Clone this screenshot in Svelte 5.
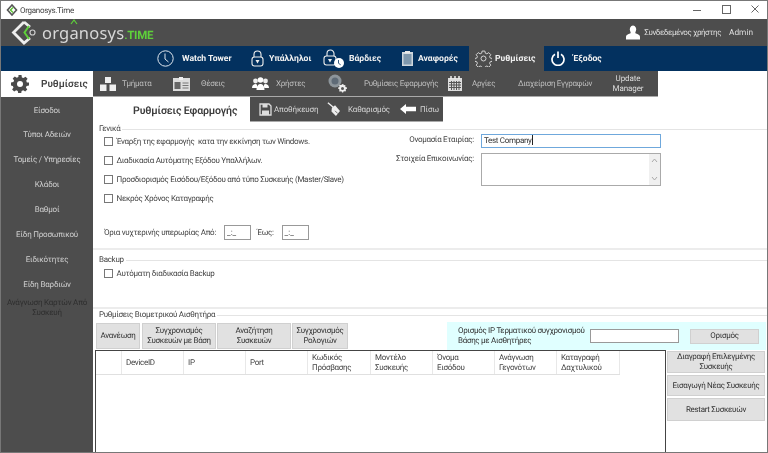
<script>
  const sideItems = ['Τύποι Αδειών', 'Τομείς / Υπηρεσίες', 'Κλάδοι', 'Βαθμοί', 'Είδη Προσωπικού', 'Ειδικότητες', 'Είδη Βαρδιών'];
  const checks = [
    'Έναρξη της εφαρμογής  κατα την εκκίνηση των Windows.',
    'Διαδικασία Αυτόματης Εξόδου Υπαλλήλων.',
    'Προσδιορισμός Εισόδου/Εξόδου από τύπο Συσκευής (Master/Slave)',
    'Νεκρός Χρόνος Καταγραφής'
  ];
  const columns = [
    ['', 26], ['DeviceID', 62], ['IP', 62], ['Port', 62], ['Κωδικός Πρόσβασης', 63],
    ['Μοντέλο Συσκευής', 62], ['Όνομα Εισόδου', 62], ['Ανάγνωση Γεγονότων', 62], ['Καταγραφή Δαχτυλικού', 63]
  ];
</script>

<div class="window">
  <div class="titlebar">
    <svg class="app-icon" width="12" height="12" viewBox="0 0 12 12">
      <path d="M6 1 1.5 6 6 11 10.5 6Z" fill="none" stroke="#555" stroke-width="1.6" />
      <path d="M7 3.5 4.5 6 7 8.500" fill="none" stroke="#5cc232" stroke-width="1.5" />
    </svg>
    <span class="app-title">Organosys.Time</span>
    <div class="win-controls">
      <svg width="12" height="12" viewBox="0 0 12 12"><path d="M1 6.500h8" stroke="#666" /></svg>
      <svg width="12" height="12" viewBox="0 0 12 12"><rect x="1.500" y="1.500" width="8" height="8" fill="none" stroke="#666" /></svg>
      <svg width="12" height="12" viewBox="0 0 12 12"><path d="M1.500 1.500l7 7M8.500 1.500l-7 7" stroke="#666" /></svg>
    </div>
  </div>

  <header class="brandbar">
    <div class="logo">
      <svg width="30" height="27" viewBox="0 0 30 27">
        <path d="M13 3 2.500 13.500 13 24 19 19" fill="none" stroke="#eee" stroke-width="2.800" />
        <path d="M13 3 19 8" fill="none" stroke="#eee" stroke-width="2.800" />
        <path d="M18 7 13.500 13.500 18 20" fill="none" stroke="#5ed03a" stroke-width="2" />
        <circle cx="21.500" cy="13.500" r="2.500" fill="none" stroke="#ccc" stroke-width="1.200" />
      </svg>
      <span class="logo-name">organosys</span><span class="logo-suffix">.TIME</span>
      <svg class="logo-caret" width="8" height="6" viewBox="0 0 8 6"><path d="M1 5 4 1 7 5" fill="none" stroke="#5ed03a" stroke-width="1.200" /></svg>
    </div>
    <div class="user">
      <svg width="14" height="16" viewBox="0 0 15 16"><path d="M7.500 0a3.500 4 0 0 1 3 6c-.6 1.200-.8 2 .2 2.600 2 .8 4.300 1.400 4.300 3.400v3H0v-3c0-2 2.300-2.600 4.300-3.400 1-.6.800-1.400.2-2.600a3.500 4 0 0 1 3-6Z" fill="#fff" /></svg>
      <span class="user-label">Συνδεδεμένος χρήστης</span>
      <span class="user-name">Admin</span>
    </div>
  </header>

  <nav class="mainnav">
    <div class="nav-item w-tower">
      <svg width="17" height="17" viewBox="0 0 17 17"><circle cx="8.500" cy="8.500" r="7.700" fill="none" stroke="#dfe6ee" /><path d="M8 3.500V9l3.500 3" fill="none" stroke="#dfe6ee" /></svg>
      <span>Watch Tower</span>
    </div>
    <div class="nav-item w-staff">
      <svg width="13" height="17" viewBox="0 0 13 17"><path d="M3 7V4.500a3.500 3.500 0 0 1 7 0V7" fill="none" stroke="#eee" stroke-width="1.100" /><rect x="1" y="7" width="11" height="9" rx="2.500" fill="none" stroke="#eee" stroke-width="1.100" /><path d="M4.500 10h4L6.500 13.500Z" fill="#eee" /></svg>
      <span>Υπάλληλοι</span>
    </div>
    <div class="nav-item w-shifts">
      <svg width="22" height="19" viewBox="0 0 22 19"><path d="M4 7V4.500a3.500 3.500 0 0 1 7 0V7" fill="none" stroke="#eee" stroke-width="1.100" /><rect x="1" y="7" width="12" height="9" rx="2.500" fill="none" stroke="#eee" stroke-width="1.100" /><path d="M5 10h4L7 13.500Z" fill="#eee" /><circle cx="16" cy="14" r="5" fill="#fff" /><path d="M15.500 11v3.300l2.200 1.500" fill="none" stroke="#35597f" /></svg>
      <span>Βάρδιες</span>
    </div>
    <div class="nav-item w-reports">
      <svg width="11" height="15" viewBox="0 0 11 15"><rect x="0" y="1" width="11" height="14" fill="#cfd6dc" /><rect x="1.500" y="3" width="8" height="10.500" fill="#7f98ad" /><rect x="3" y="0" width="5" height="2.500" fill="#e8e8e8" /></svg>
      <span>Αναφορές</span>
    </div>
    <div class="nav-item active">
      <svg width="17" height="17" viewBox="0 0 24 24"><path d="M10 1.500h4l.6 3 2.200.9 2.600-1.700 2.900 2.900-1.700 2.600.9 2.200 3 .6v4l-3 .6-.9 2.200 1.700 2.600-2.900 2.900-2.600-1.700-2.200.9-.6 3h-4l-.6-3-2.200-.9-2.600 1.700-2.900-2.900 1.700-2.600-.9-2.200-3-.6v-4l3-.6.9-2.200-1.700-2.600 2.900-2.900 2.600 1.700 2.200-.9Z" fill="none" stroke="#ddd" stroke-width="1.300" /><circle cx="12" cy="12" r="3.500" fill="none" stroke="#ddd" stroke-width="1.300" /></svg>
      <span>Ρυθμίσεις</span>
    </div>
    <div class="nav-item w-exit">
      <svg width="14" height="15" viewBox="0 0 14 15"><path d="M4 3.200a6 6 0 1 0 6 0" fill="none" stroke="#fff" stroke-width="1.700" /><path d="M7 0.500v6.500" stroke="#fff" stroke-width="1.700" /></svg>
      <span>Έξοδος</span>
    </div>
  </nav>

  <div class="workspace">
    <aside class="side">
      <div class="side-head">
        <svg width="18" height="18" viewBox="0 0 18 18"><path d="M7.500 0h3l.4 2.400 1.600.7 2-1.400 2.100 2.100-1.400 2 .7 1.600L18 7.500v3l-2.400.4-.7 1.600 1.400 2-2.100 2.100-2-1.400-1.600.7-.4 2.400h-3l-.4-2.400-1.600-.7-2 1.400-2.100-2.100 1.400-2-.7-1.600L0 10.500v-3l2.400-.4.7-1.600-1.400-2 2.100-2.100 2 1.400 1.600-.7Z" fill="#4a4a4a" /><circle cx="9" cy="9" r="3" fill="#fff" /></svg>
        <span>Ρυθμίσεις</span>
      </div>
      <div class="side-list">
        <div class="side-item first">Είσοδοι</div>
        {#each sideItems as item}
          <div class="side-item">{item}</div>
        {/each}
        <div class="side-item last">Ανάγνωση Καρτών Από Συσκευή</div>
      </div>
    </aside>

    <div class="page">
      <div class="subnav">
        <div class="sub-item w-dep">
          <svg width="16" height="14" viewBox="0 0 16 14"><rect x="5" y="0" width="6" height="6" fill="#eee" /><rect x="0" y="7.500" width="6.500" height="6.500" fill="#eee" /><rect x="9.500" y="7.500" width="6.500" height="6.500" fill="#eee" /></svg>
          <span>Τμήματα</span>
        </div>
        <div class="sub-item w-pos">
          <svg width="17" height="14" viewBox="0 0 17 14"><rect x="0" y="1" width="17" height="13" fill="#ddd" /><rect x="6" y="0" width="4" height="3" fill="#eee" /><rect x="1.500" y="5" width="6" height="7" fill="#666" /><path d="M9.500 6h6M9.500 8.500h6M9.500 11h6" stroke="#777" /></svg>
          <span>Θέσεις</span>
        </div>
        <div class="sub-item w-users">
          <svg width="17" height="13" viewBox="0 0 17 13"><circle cx="3.500" cy="4" r="2.400" fill="#eee" /><circle cx="13.500" cy="4" r="2.400" fill="#eee" /><circle cx="8.500" cy="3" r="2.800" fill="#fff" /><path d="M0 11c0-3 2-4 3.500-4S5 8 5 8v3Zm17 0c0-3-2-4-3.500-4S12 8 12 8v3ZM4.500 13c0-5 2.500-6 4-6s4 1 4 6Z" fill="#fff" /></svg>
          <span>Χρήστες</span>
        </div>
        <div class="sub-item w-app">
          <svg width="20" height="20" viewBox="0 0 20 20"><circle cx="7" cy="7" r="6.500" fill="#8d959b" /><circle cx="7" cy="7" r="3.500" fill="#5f6b77" /><path d="M14.500 10l1 .2.300 1 1-.3.800.8-.4 1 .8.600 1 .2v1.200l-1 .3-.4.900.5.900-.8.800-1-.4-.8.400-.3 1h-1.200l-.3-1-.9-.4-.9.500-.8-.8.400-1-.4-.8-1-.3v-1.200l1-.3.400-.8-.4-1 .8-.8.900.4.900-.4Z" fill="#eee" /><circle cx="14.500" cy="14.500" r="1.500" fill="#555" /></svg>
          <span>Ρυθμίσεις Εφαρμογής</span>
        </div>
        <div class="sub-item w-hol">
          <svg width="14" height="15" viewBox="0 0 14 15"><rect x="0" y="2" width="14" height="13" fill="#ddd" /><path d="M3 0v3M7 0v3M11 0v3" stroke="#eee" stroke-width="1.500" /><path d="M1 6.500h12M1 9h12M1 11.500h12M3.500 5v9M6 5v9M8.500 5v9M11 5v9" stroke="#555" /></svg>
          <span>Αργίες</span>
        </div>
        <div class="sub-item w-rec"><span>Διαχείριση Εγγραφών</span></div>
        <div class="sub-item w-upd"><span>Update<br />Manager</span></div>
      </div>

      <div class="title-row">
        <h1>Ρυθμίσεις Εφαρμογής</h1>
        <div class="toolbar">
          <div class="tool w-save">
            <svg width="13" height="13" viewBox="0 0 13 13"><path d="M1 1h9l2 2v9H1Z" fill="none" stroke="#ddd" stroke-width="1.300" /><rect x="3.500" y="1" width="5" height="3.500" fill="#ddd" /><rect x="3" y="7.500" width="7" height="4.500" fill="#ddd" /></svg>
            <span>Αποθήκευση</span>
          </div>
          <div class="tool w-clean">
            <svg width="17" height="17" viewBox="0 0 19 17"><path d="M1 1l6 5" stroke="#eee" stroke-width="1.500" /><path d="M5.500 6.500 9 3.800l5.500 6.500-4.500 5.500-5-5Z" fill="#eee" /><path d="M9 10l3 3" stroke="#666" /></svg>
            <span>Καθαρισμός</span>
          </div>
          <div class="tool w-back">
            <svg width="16" height="10" viewBox="0 0 16 10"><path d="M0 5 6 0v2.800h10v4.400H6V10Z" fill="#fff" /></svg>
            <span>Πίσω</span>
          </div>
        </div>
      </div>

      <section class="group general">
        <div class="legend"><span>Γενικά</span></div>
        <div class="general-body">
          <div class="general-left">
            {#each checks as label}
              <div class="check"><i class="box"></i><span>{label}</span></div>
            {/each}
            <div class="night">
              <span>Όρια νυχτερινής υπερωρίας Από:</span>
              <span class="mask">_:_</span>
              <span class="until">Έως:</span>
              <span class="mask">_:_</span>
            </div>
          </div>
          <div class="general-right">
            <div class="field">
              <span class="field-label">Ονομασία Εταιρίας:</span>
              <div class="input focused">Test Company<i class="caret"></i></div>
            </div>
            <div class="field contact">
              <span class="field-label">Στοιχεία Επικοινωνίας:</span>
              <div class="textarea">
                <div class="scroll">
                  <svg width="7" height="5" viewBox="0 0 7 5"><path d="M1 4 3.500 1 6 4" fill="none" stroke="#aaa" /></svg>
                  <svg width="7" height="5" viewBox="0 0 7 5"><path d="M1 1 3.500 4 6 1" fill="none" stroke="#aaa" /></svg>
                </div>
              </div>
            </div>
          </div>
        </div>
      </section>

      <section class="group backup">
        <div class="legend"><span>Backup</span></div>
        <div class="check"><i class="box"></i><span>Αυτόματη διαδικασία Backup</span></div>
      </section>

      <section class="biometric">
        <div class="legend"><span>Ρυθμίσεις Βιομετρικού Αισθητήρα</span></div>
        <div class="actions">
          <button class="b-refresh">Ανανέωση</button>
          <button class="b-sync">Συγχρονισμός<br />Συσκευών με Βάση</button>
          <button class="b-search">Αναζήτηση<br />Συσκευών</button>
          <button class="b-clock">Συγχρονισμός<br />Ρολογιών</button>
          <div class="ip-panel">
            <span class="ip-label">Ορισμός IP Τερματικού συγχρονισμού<br />Βάσης με Αισθητήρες</span>
            <div class="ip-input"></div>
            <button class="b-set">Ορισμός</button>
          </div>
        </div>
        <div class="devices">
          <div class="grid">
            <div class="grid-head">
              {#each columns as [name, width]}
                <div class="cell" style="width: {width}px">{name}</div>
              {/each}
            </div>
          </div>
          <div class="device-actions">
            <button class="d1">Διαγραφή Επιλεγμένης<br />Συσκευής</button>
            <button class="d2">Εισαγωγή Νέας Συσκευής</button>
            <button class="d3">Restart Συσκευών</button>
          </div>
        </div>
      </section>
    </div>
  </div>
</div>

<style>
  :global(body) {
    margin: 0;
    overflow: hidden;
  }

  .window {
    width: 768px;
    height: 453px;
    box-sizing: border-box;
    border: 1px solid #777;
    display: flex;
    flex-direction: column;
    overflow: hidden;
    background: #fff;
    font-family: Roboto, "Noto Sans", sans-serif;
    font-size: 8px;
    letter-spacing: -0.3px;
    text-rendering: geometricPrecision;
    color: #444;
    filter: blur(0.45px);
  }

  /* ---- title bar ---- */
  .titlebar {
    height: 18px;
    flex-shrink: 0;
    display: flex;
    align-items: center;
    padding-left: 5px;
    color: #444;
  }
  .app-title {
    margin-left: 2px;
    font-size: 8px;
  }
  .win-controls {
    margin-left: auto;
    display: flex;
    gap: 17px;
    padding-right: 5px;
  }

  /* ---- brand bar ---- */
  .brandbar {
    height: 27px;
    flex-shrink: 0;
    background: #4d4d4d;
    display: flex;
    align-items: center;
    justify-content: space-between;
  }
  .logo {
    position: relative;
    display: flex;
    align-items: center;
    padding-left: 10px;
  }
  .logo-name {
    margin-left: 1px;
    font-family: "Noto Sans", sans-serif;
    font-size: 16.5px;
    letter-spacing: 0.2px;
    color: #d8d8d8;
    line-height: 27px;
  }
  .logo-suffix {
    font-size: 11.5px;
    font-weight: 700;
    letter-spacing: -0.3px;
    color: #5ed03a;
    margin-top: 4px;
  }
  .logo-caret {
    position: absolute;
    left: 69px;
    top: 0;
  }
  .user {
    display: flex;
    align-items: center;
    padding-right: 14px;
    color: #ddd;
  }
  .user-label {
    margin-left: 4px;
    letter-spacing: -0.42px;
  }
  .user-name {
    margin-left: 8px;
    font-size: 8.3px;
    letter-spacing: 0;
  }

  /* ---- main nav ---- */
  .mainnav {
    height: 25px;
    flex-shrink: 0;
    background: #03315f;
    display: flex;
    padding-left: 156px;
    color: #f2f2f2;
    font-size: 8.6px;
    font-weight: 700;
    letter-spacing: 0;
  }
  .nav-item {
    display: flex;
    align-items: center;
  }
  .w-tower { width: 94px; gap: 8px; }
  .w-staff { width: 72px; gap: 5px; }
  .w-shifts { width: 79px; gap: 4px; }
  .w-reports { width: 67px; gap: 5px; }
  .nav-item.active {
    width: 75px;
    background: #4d4d4d;
    box-sizing: border-box;
    padding-left: 6px;
    gap: 3px;
  }
  .w-exit {
    padding-left: 7px;
    gap: 8px;
  }

  /* ---- workspace ---- */
  .workspace {
    flex: 1;
    min-height: 0;
    display: flex;
  }
  .side {
    width: 92px;
    flex-shrink: 0;
    display: flex;
    flex-direction: column;
  }
  .side-head {
    height: 26px;
    flex-shrink: 0;
    display: flex;
    align-items: center;
    padding-left: 10px;
    gap: 12px;
    font-size: 10px;
    font-weight: 600;
    letter-spacing: 0;
    color: #444;
  }
  .side-list {
    flex: 1;
    background: #4d4d4d;
    color: #d0d0d0;
    text-align: center;
    letter-spacing: -0.2px;
  }
  .side-item {
    height: 25px;
    line-height: 25px;
    white-space: nowrap;
  }
  .side-item.first {
    margin-top: 1px;
    height: 24px;
  }
  .side-item.last {
    white-space: normal;
    line-height: 9.5px;
    margin-top: 1px;
    color: #2e2e2e;
  }

  .page {
    flex: 1;
    min-width: 0;
    display: flex;
    flex-direction: column;
  }

  /* ---- sub nav ---- */
  .subnav {
    width: 565px;
    height: 26px;
    flex-shrink: 0;
    background: #4d4d4d;
    display: flex;
    color: #bdbdbd;
    border-bottom: 1px solid #aaa;
    box-sizing: border-box;
  }
  .sub-item {
    display: flex;
    align-items: center;
    flex-shrink: 0;
    white-space: nowrap;
    box-sizing: border-box;
  }
  .w-dep { width: 80px; padding-left: 7px; gap: 6px; }
  .w-pos { width: 79px; gap: 11px; }
  .w-users { width: 76px; gap: 7px; }
  .w-app { width: 120px; gap: 16px; }
  .w-hol { width: 70px; gap: 10px; }
  .w-rec { width: 80px; }
  .w-upd { flex: 1; justify-content: center; text-align: center; line-height: 9.5px; color: #ddd; letter-spacing: -0.1px; }

  /* ---- title row ---- */
  .title-row {
    height: 25px;
    flex-shrink: 0;
    display: flex;
    padding-left: 40px;
  }
  h1 {
    margin: 0;
    width: 117px;
    font-size: 10.6px;
    font-weight: 600;
    letter-spacing: -0.15px;
    line-height: 27px;
    color: #3c3c3c;
    white-space: nowrap;
  }
  .toolbar {
    width: 193px;
    height: 25px;
    box-sizing: border-box;
    background: #4d4d4d;
    border-bottom: 1px solid #aaa;
    display: flex;
    color: #d5d5d5;
    letter-spacing: -0.15px;
  }
  .tool {
    display: flex;
    align-items: center;
    box-sizing: border-box;
    white-space: nowrap;
  }
  .w-save { width: 77px; padding-left: 9px; gap: 2px; }
  .w-clean { width: 73px; gap: 4px; }
  .w-back { gap: 4px; }

  /* ---- groups ---- */
  .legend {
    display: flex;
    align-items: center;
    height: 10px;
    line-height: 10px;
    padding-left: 6px;
    color: #444;
    white-space: nowrap;
  }
  .legend::after {
    content: '';
    flex: 1;
    height: 1px;
    background: #e4e4e4;
    margin-left: 2px;
  }
  .group {
    flex-shrink: 0;
    box-sizing: border-box;
    border-bottom: 2px solid #ececec;
  }
  .general {
    height: 126px;
    margin-top: 2px;
  }
  .general-body {
    display: flex;
  }
  .general-left {
    width: 300px;
    padding: 0 0 0 11px;
    box-sizing: border-box;
    margin-top: -2px;
  }
  .check {
    display: flex;
    align-items: center;
    height: 19px;
    gap: 3.5px;
    white-space: pre;
  }
  .box {
    width: 7px;
    height: 7px;
    border: 1px solid #777;
    background: #fff;
    flex-shrink: 0;
  }
  .night {
    display: flex;
    align-items: center;
    margin-top: 17px;
    white-space: nowrap;
  }
  .mask {
    width: 27px;
    height: 15px;
    box-sizing: border-box;
    border: 1px solid #999;
    margin-left: 8px;
    line-height: 14px;
    padding-left: 2px;
    font-size: 8px;
    letter-spacing: 0;
  }
  .until {
    margin-left: 6px;
  }
  .general-right {
    width: 270px;
  }
  .field {
    display: flex;
    align-items: flex-start;
  }
  .field-label {
    width: 81px;
    margin-right: 7px;
    text-align: right;
    white-space: nowrap;
    line-height: 12px;
  }
  .input {
    width: 180px;
    height: 14px;
    box-sizing: border-box;
    border: 1px solid #6fa8dc;
    padding-left: 2px;
    line-height: 12px;
    color: #333;
  }
  .caret {
    display: inline-block;
    width: 1px;
    height: 10px;
    background: #222;
    vertical-align: -2px;
  }
  .contact {
    margin-top: 5px;
  }
  .textarea {
    width: 180px;
    height: 33px;
    box-sizing: border-box;
    border: 1px solid #aaa;
    display: flex;
    justify-content: flex-end;
  }
  .scroll {
    width: 11px;
    background: #f0f0f0;
    display: flex;
    flex-direction: column;
    justify-content: space-between;
    align-items: center;
    padding: 4px 0;
    box-sizing: border-box;
  }

  .backup {
    height: 54px;
    margin-top: 5px;
  }
  .backup .check {
    margin-left: 11px;
    margin-top: -1px;
  }

  .biometric {
    flex: 1;
    min-height: 0;
    margin-top: 1px;
    display: flex;
    flex-direction: column;
  }
  button {
    font: inherit;
    letter-spacing: -0.3px;
    text-rendering: geometricPrecision;
    color: #333;
    background: #e1e1e1;
    border: 1px solid #d0d0d0;
    padding: 0;
    margin: 0;
    line-height: 10px;
    flex-shrink: 0;
    white-space: nowrap;
  }
  .actions {
    display: flex;
    height: 28px;
    flex-shrink: 0;
    margin-top: 2px;
    padding-left: 3px;
  }
  .actions > button {
    height: 26px;
    margin-top: 1px;
    margin-right: 1px;
  }
  .actions > .b-refresh { width: 44px; margin-right: 2px; }
  .b-sync { width: 74px; }
  .b-search { width: 74px; }
  .b-clock { width: 56px; }
  .ip-panel {
    width: 319px;
    margin-left: 98px;
    height: 28px;
    background: #e0ffff;
    display: flex;
    align-items: center;
    padding-left: 11px;
    box-sizing: border-box;
    flex-shrink: 0;
  }
  .ip-label {
    width: 132px;
    white-space: nowrap;
    line-height: 10px;
    color: #333;
  }
  .ip-input {
    width: 89px;
    height: 14px;
    box-sizing: border-box;
    background: #fff;
    border: 1px solid #999;
  }
  .b-set {
    width: 69px;
    height: 15px;
    margin-left: 11px;
  }
  .devices {
    flex: 1;
    min-height: 0;
    display: flex;
    padding-left: 2px;
  }
  .grid {
    width: 571px;
    flex-shrink: 0;
    box-sizing: border-box;
    border: 1px solid #444;
    border-bottom: 0;
  }
  .grid-head {
    display: flex;
    height: 24px;
    box-sizing: border-box;
    border-bottom: 1px solid #e0e0e0;
    width: max-content;
  }
  .cell {
    box-sizing: border-box;
    border-right: 1px solid #e8e8e8;
    padding: 0 18px 0 4px;
    display: flex;
    align-items: center;
    line-height: 10px;
    color: #444;
  }
  .device-actions {
    display: flex;
    flex-direction: column;
    gap: 2px;
    padding: 1px 0 0 1px;
  }
  .device-actions button {
    width: 98px;
  }
  .d1 { height: 22px; }
  .d2 { height: 21px; }
  .d3 { height: 23px; }
</style>
